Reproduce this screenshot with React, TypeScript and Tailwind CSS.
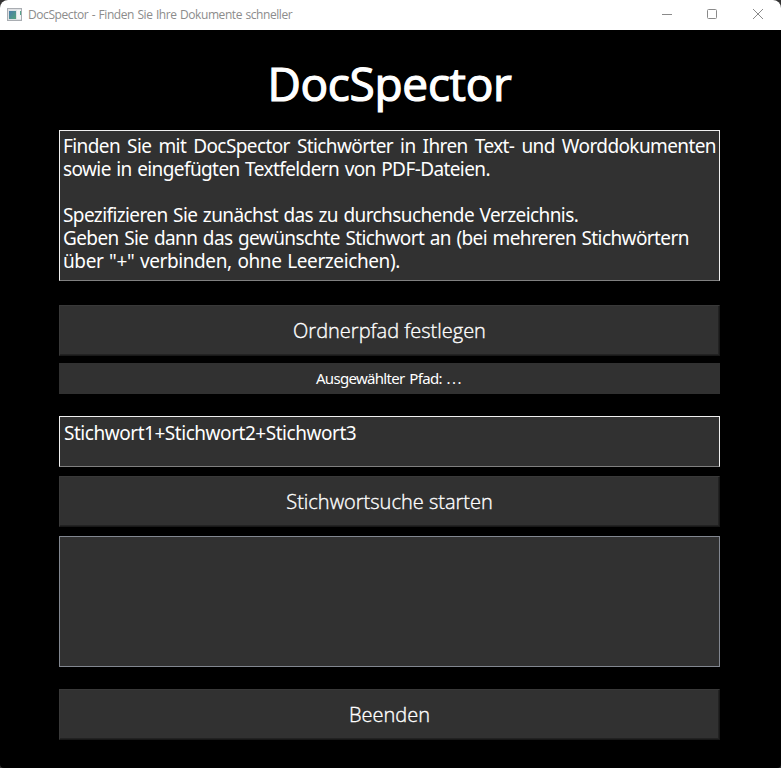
import type { ReactNode } from "react";

function AppIcon() {
  return (
    <svg width="16" height="14" viewBox="0 0 16 14" shapeRendering="crispEdges">
      <defs>
        <linearGradient id="pane" x1="0" y1="0" x2="1" y2="1">
          <stop offset="0" stopColor="#4a7cab" />
          <stop offset="1" stopColor="#55a37c" />
        </linearGradient>
      </defs>
      <rect x="0" y="0" width="15" height="13" fill="#a9adb2" />
      <rect x="1" y="1" width="13" height="11" fill="#dfe1e4" />
      <rect x="2" y="3" width="7" height="8" fill="url(#pane)" />
      <rect x="10" y="2" width="4" height="9" fill="#f4f4f4" />
      <rect x="13" y="3" width="1" height="4" fill="#58a58c" />
    </svg>
  );
}

function TitleBar() {
  return (
    <header className="flex h-[30px] items-center justify-between rounded-t-[8px] bg-white pl-[7px] font-['Open_Sans','Noto_Sans',sans-serif]">
      <div className="flex items-center gap-[5px]">
        <AppIcon />
        <span className="text-[12px] leading-[16px] tracking-[-0.42px] [word-spacing:0.7px] whitespace-nowrap text-[#8c8c8c]">
          DocSpector - Finden Sie Ihre Dokumente schneller
        </span>
      </div>
      <svg width="137" height="30" viewBox="0 0 137 30" fill="none" stroke="#8a8a8a">
        <path d="M18 14.5h10" />
        <rect x="63.5" y="9.5" width="9" height="9" rx="1" />
        <path d="M109 9l10 10M119 9l-10 10" />
      </svg>
    </header>
  );
}

function PushButton({ children }: { children: ReactNode }) {
  return (
    <button className="flex h-[51px] w-full shrink-0 items-center justify-center border border-t-[#393939] border-r-[#181818] border-b-[#181818] border-l-[#393939] bg-[#313131] text-[20px] leading-none text-white shadow-[inset_-1px_-1px_0_#222] font-['Open_Sans','Noto_Sans',sans-serif] font-light [-webkit-text-stroke:0.35px_white]">
      {children}
    </button>
  );
}

export default function App() {
  return (
    <div className="h-[768px] w-[781px] bg-[#333] font-['Noto_Sans','DejaVu_Sans',sans-serif] text-white">
      <div className="flex h-full flex-col rounded-t-[8px] rounded-b-[4px] bg-black">
        <TitleBar />
        <main className="flex flex-col pr-[61px] pl-[59px]">
          <h1 className="flex h-[100px] items-center justify-center text-[46px] leading-none font-normal whitespace-nowrap tracking-[-0.3px] [-webkit-text-stroke:1.2px_white] font-['Open_Sans','Noto_Sans',sans-serif]">
            <span className="pt-[6px]">DocSpector</span>
          </h1>
          <div className="h-[151px] border border-[#f0f0f0] border-b-[#808080] bg-[#313131] px-[3px] pt-[4px] text-[19px] leading-[23px] whitespace-nowrap tracking-[-0.6px] [word-spacing:1.15px]">
            <div className="[text-align-last:justify]">
              Finden Sie mit DocSpector Stichwörter in Ihren Text- und Worddokumenten
            </div>
            <div>sowie in eingefügten Textfeldern von PDF-Dateien.</div>
            <div className="h-[23px]" />
            <div>Spezifizieren Sie zunächst das zu durchsuchende Verzeichnis.</div>
            <div>Geben Sie dann das gewünschte Stichwort an (bei mehreren Stichwörtern</div>
            <div className="tracking-[-0.4px]">über "+" verbinden, ohne Leerzeichen).</div>
          </div>
          <div className="mt-[24px]">
            <PushButton>Ordnerpfad festlegen</PushButton>
          </div>
          <div className="mt-[7px] flex h-[31px] items-center justify-center bg-[#313131] text-[15px] leading-none tracking-[-0.68px] [word-spacing:1.5px]">
            <span className="whitespace-pre">
              Ausgewählter Pfad: <span className="tracking-[1.5px]">...</span>
            </span>
          </div>
          <div className="mt-[22px] h-[51px] border border-[#f0f0f0] border-b-[#808080] bg-[#313131] px-[4px] pt-[5px] text-[19px] leading-[23px] tracking-[-0.46px]">
            Stichwort1+Stichwort2+Stichwort3
          </div>
          <div className="mt-[9px]">
            <PushButton>Stichwortsuche starten</PushButton>
          </div>
          <div className="mt-[9px] h-[131px] border border-[#828790] bg-[#313131]" />
          <div className="mt-[22px]">
            <PushButton>Beenden</PushButton>
          </div>
        </main>
      </div>
    </div>
  );
}
